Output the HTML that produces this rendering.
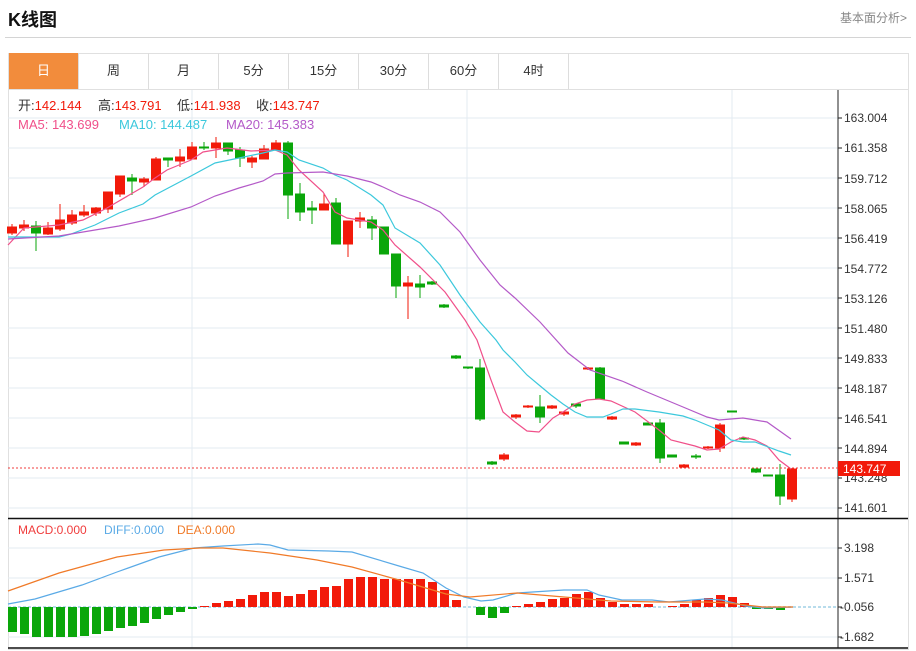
<!DOCTYPE html>
<html><head><meta charset="utf-8"><style>
body{margin:0;width:916px;height:651px;background:#fff;font-family:"Liberation Sans","Noto Sans CJK SC",sans-serif;overflow:hidden;position:relative}
.t{position:absolute;white-space:nowrap}
.tab{position:absolute;top:53px;height:36px;width:69px;border-right:1px solid #ddd;text-align:center;line-height:36px;font-size:13px;color:#333}
</style></head><body>
<div class="t" style="left:8px;top:6px;font-size:18px;font-weight:bold;color:#111">K线图</div>
<div class="t" style="left:840px;top:9px;font-size:12px;color:#888">基本面分析&gt;</div>
<div style="position:absolute;left:5px;top:37px;width:906px;height:1px;background:#d4d4d4"></div>
<div style="position:absolute;left:8px;top:53px;width:899px;height:595px;border:1px solid #e0e0e0"></div>
<div style="position:absolute;left:8px;top:89px;width:900px;height:1px;background:#e0e0e0"></div>
<div class="tab" style="left:9px;background:#f28c3c;color:#fff">日</div>
<div class="tab" style="left:79px">周</div>
<div class="tab" style="left:149px">月</div>
<div class="tab" style="left:219px">5分</div>
<div class="tab" style="left:289px">15分</div>
<div class="tab" style="left:359px">30分</div>
<div class="tab" style="left:429px">60分</div>
<div class="tab" style="left:499px">4时</div>
<svg style="position:absolute;left:0;top:0" width="916" height="651">
<g stroke="#e3ebf2" stroke-width="1">
<line x1="8" x2="838" y1="118" y2="118"/><line x1="8" x2="838" y1="148" y2="148"/><line x1="8" x2="838" y1="178" y2="178"/><line x1="8" x2="838" y1="208" y2="208"/><line x1="8" x2="838" y1="238" y2="238"/><line x1="8" x2="838" y1="268" y2="268"/><line x1="8" x2="838" y1="298" y2="298"/><line x1="8" x2="838" y1="328" y2="328"/><line x1="8" x2="838" y1="358" y2="358"/><line x1="8" x2="838" y1="388" y2="388"/><line x1="8" x2="838" y1="418" y2="418"/><line x1="8" x2="838" y1="448" y2="448"/><line x1="8" x2="838" y1="478" y2="478"/><line x1="8" x2="838" y1="508" y2="508"/>
<line x1="8" x2="838" y1="548" y2="548"/><line x1="8" x2="838" y1="578" y2="578"/><line x1="8" x2="838" y1="637" y2="637"/>
<line x1="192" x2="192" y1="90" y2="648"/><line x1="467" x2="467" y1="90" y2="648"/><line x1="732" x2="732" y1="90" y2="648"/>
</g>
<line x1="8" x2="838" y1="607" y2="607" stroke="#b8dcec" stroke-width="2" stroke-dasharray="3,2"/>
<line x1="838" x2="838" y1="90" y2="648" stroke="#222"/>
<line x1="8" x2="908" y1="518.5" y2="518.5" stroke="#111" stroke-width="1.5"/>
<line x1="8" x2="908" y1="648" y2="648" stroke="#111" stroke-width="1.5"/>
<g stroke="#222"><line x1="838" x2="842" y1="118" y2="118"/><line x1="838" x2="842" y1="148" y2="148"/><line x1="838" x2="842" y1="178" y2="178"/><line x1="838" x2="842" y1="208" y2="208"/><line x1="838" x2="842" y1="238" y2="238"/><line x1="838" x2="842" y1="268" y2="268"/><line x1="838" x2="842" y1="298" y2="298"/><line x1="838" x2="842" y1="328" y2="328"/><line x1="838" x2="842" y1="358" y2="358"/><line x1="838" x2="842" y1="388" y2="388"/><line x1="838" x2="842" y1="418" y2="418"/><line x1="838" x2="842" y1="448" y2="448"/><line x1="838" x2="842" y1="478" y2="478"/><line x1="838" x2="842" y1="508" y2="508"/><line x1="838" x2="842" y1="548" y2="548"/><line x1="838" x2="842" y1="578" y2="578"/><line x1="838" x2="842" y1="607" y2="607"/><line x1="838" x2="842" y1="637" y2="637"/></g>
<g font-size="12" fill="#333" font-family="Liberation Sans, sans-serif">
<text x="844" y="122">163.004</text><text x="844" y="152">161.358</text><text x="844" y="183">159.712</text><text x="844" y="213">158.065</text><text x="844" y="243">156.419</text><text x="844" y="273">154.772</text><text x="844" y="303">153.126</text><text x="844" y="333">151.480</text><text x="844" y="363">149.833</text><text x="844" y="393">148.187</text><text x="844" y="423">146.541</text><text x="844" y="453">144.894</text><text x="844" y="482">143.248</text><text x="844" y="512">141.601</text>
<text x="844" y="552">3.198</text><text x="844" y="582">1.571</text><text x="840" y="611">-0.056</text><text x="840" y="641">-1.682</text>
</g>
<g>
<g stroke="#f21a0a" fill="#f21a0a">
<line x1="12" x2="12" y1="224" y2="235"/><rect x="7.5" y="227" width="9" height="6"/>
<line x1="24" x2="24" y1="220" y2="231"/><rect x="19.5" y="225" width="9" height="3"/>
<line x1="48" x2="48" y1="222" y2="235"/><rect x="43.5" y="228" width="9" height="6"/>
<line x1="60" x2="60" y1="204" y2="231"/><rect x="55.5" y="220" width="9" height="9"/>
<line x1="72" x2="72" y1="210" y2="225"/><rect x="67.5" y="215" width="9" height="8"/>
<line x1="84" x2="84" y1="205" y2="217"/><rect x="79.5" y="212" width="9" height="3"/>
<line x1="96" x2="96" y1="207" y2="216"/><rect x="91.5" y="208" width="9" height="5"/>
<line x1="108" x2="108" y1="192" y2="213"/><rect x="103.5" y="192" width="9" height="17"/>
<line x1="120" x2="120" y1="176" y2="197"/><rect x="115.5" y="176" width="9" height="18"/>
<line x1="144" x2="144" y1="177" y2="187"/><rect x="139.5" y="179" width="9" height="3"/>
<line x1="156" x2="156" y1="157" y2="180"/><rect x="151.5" y="159" width="9" height="21"/>
<line x1="180" x2="180" y1="149" y2="167"/><rect x="175.5" y="157" width="9" height="4"/>
<line x1="192" x2="192" y1="142" y2="159"/><rect x="187.5" y="147" width="9" height="12"/>
<line x1="216" x2="216" y1="137" y2="158"/><rect x="211.5" y="143" width="9" height="5"/>
<line x1="252" x2="252" y1="156" y2="168"/><rect x="247.5" y="158" width="9" height="4"/>
<line x1="264" x2="264" y1="145" y2="159"/><rect x="259.5" y="149" width="9" height="10"/>
<line x1="276" x2="276" y1="140" y2="150"/><rect x="271.5" y="143" width="9" height="7"/>
<line x1="324" x2="324" y1="193" y2="210"/><rect x="319.5" y="204" width="9" height="6"/>
<line x1="348" x2="348" y1="221" y2="257"/><rect x="343.5" y="221" width="9" height="23"/>
<line x1="360" x2="360" y1="212" y2="228"/><rect x="355.5" y="218" width="9" height="3"/>
<line x1="408" x2="408" y1="276" y2="319"/><rect x="403.5" y="283" width="9" height="3"/>
<line x1="504" x2="504" y1="453" y2="461"/><rect x="499.5" y="455" width="9" height="4"/>
<line x1="516" x2="516" y1="414" y2="419"/><rect x="511.5" y="415" width="9" height="2"/>
<line x1="528" x2="528" y1="405" y2="408"/><rect x="523.5" y="406" width="9" height="1"/>
<line x1="552" x2="552" y1="405" y2="409"/><rect x="547.5" y="406" width="9" height="2"/>
<line x1="564" x2="564" y1="411" y2="416"/><rect x="559.5" y="412" width="9" height="2"/>
<line x1="588" x2="588" y1="367" y2="370"/><rect x="583.5" y="368" width="9" height="1"/>
<line x1="612" x2="612" y1="416" y2="420"/><rect x="607.5" y="417" width="9" height="2"/>
<line x1="636" x2="636" y1="442" y2="446"/><rect x="631.5" y="443" width="9" height="2"/>
<line x1="684" x2="684" y1="464" y2="468"/><rect x="679.5" y="465" width="9" height="2"/>
<line x1="708" x2="708" y1="446" y2="449"/><rect x="703.5" y="447" width="9" height="1"/>
<line x1="720" x2="720" y1="423" y2="452"/><rect x="715.5" y="425" width="9" height="23"/>
<line x1="792" x2="792" y1="468" y2="502"/><rect x="787.5" y="469" width="9" height="30"/>
</g>
<g stroke="#0aa60a" fill="#0aa60a">
<line x1="36" x2="36" y1="221" y2="251"/><rect x="31.5" y="226" width="9" height="7"/>
<line x1="132" x2="132" y1="174" y2="195"/><rect x="127.5" y="178" width="9" height="3"/>
<line x1="168" x2="168" y1="158" y2="167"/><rect x="163.5" y="158" width="9" height="2"/>
<line x1="204" x2="204" y1="142" y2="150"/><rect x="199.5" y="147" width="9" height="1"/>
<line x1="228" x2="228" y1="143" y2="155"/><rect x="223.5" y="143" width="9" height="8"/>
<line x1="240" x2="240" y1="147" y2="167"/><rect x="235.5" y="150" width="9" height="8"/>
<line x1="288" x2="288" y1="141" y2="219"/><rect x="283.5" y="143" width="9" height="52"/>
<line x1="300" x2="300" y1="183" y2="221"/><rect x="295.5" y="194" width="9" height="18"/>
<line x1="312" x2="312" y1="201" y2="224"/><rect x="307.5" y="208" width="9" height="2"/>
<line x1="336" x2="336" y1="198" y2="244"/><rect x="331.5" y="203" width="9" height="41"/>
<line x1="372" x2="372" y1="216" y2="240"/><rect x="367.5" y="220" width="9" height="8"/>
<line x1="384" x2="384" y1="227" y2="254"/><rect x="379.5" y="227" width="9" height="27"/>
<line x1="396" x2="396" y1="254" y2="298"/><rect x="391.5" y="254" width="9" height="32"/>
<line x1="420" x2="420" y1="275" y2="298"/><rect x="415.5" y="284" width="9" height="3"/>
<line x1="432" x2="432" y1="281" y2="285"/><rect x="427.5" y="282" width="9" height="2"/>
<line x1="444" x2="444" y1="304" y2="308"/><rect x="439.5" y="305" width="9" height="2"/>
<line x1="456" x2="456" y1="355" y2="359"/><rect x="451.5" y="356" width="9" height="2"/>
<line x1="468" x2="468" y1="367" y2="369"/><rect x="463.5" y="367" width="9" height="1"/>
<line x1="480" x2="480" y1="359" y2="421"/><rect x="475.5" y="368" width="9" height="51"/>
<line x1="492" x2="492" y1="461" y2="465"/><rect x="487.5" y="462" width="9" height="2"/>
<line x1="540" x2="540" y1="395" y2="423"/><rect x="535.5" y="407" width="9" height="10"/>
<line x1="576" x2="576" y1="404" y2="408"/><rect x="571.5" y="404" width="9" height="2"/>
<line x1="600" x2="600" y1="367" y2="399"/><rect x="595.5" y="368" width="9" height="31"/>
<line x1="624" x2="624" y1="442" y2="444"/><rect x="619.5" y="442" width="9" height="2"/>
<line x1="648" x2="648" y1="423" y2="425"/><rect x="643.5" y="423" width="9" height="2"/>
<line x1="660" x2="660" y1="419" y2="463"/><rect x="655.5" y="423" width="9" height="35"/>
<line x1="672" x2="672" y1="455" y2="457"/><rect x="667.5" y="455" width="9" height="2"/>
<line x1="696" x2="696" y1="454" y2="459"/><rect x="691.5" y="456" width="9" height="1"/>
<line x1="732" x2="732" y1="411" y2="412"/><rect x="727.5" y="411" width="9" height="1"/>
<line x1="744" x2="744" y1="437" y2="440"/><rect x="739.5" y="438" width="9" height="1"/>
<line x1="756" x2="756" y1="469" y2="473"/><rect x="751.5" y="469" width="9" height="3"/>
<line x1="768" x2="768" y1="475" y2="476"/><rect x="763.5" y="475" width="9" height="1"/>
<line x1="780" x2="780" y1="464" y2="505"/><rect x="775.5" y="475" width="9" height="21"/>
</g>
</g>
<g fill="none" stroke-width="1.2">
<polyline stroke="#f0508a" points="8,245 24,228 59,225 83,220 107,208 143,187 155,178 167,170 191,160 203,152 227,148 251,151 275,150 287,155 299,170 323,192 335,212 347,218 371,222 383,230 395,245 420,267 445,292 465,320 477,340 491,380 503,412 515,422 527,431 539,432 553,418 563,412 575,404 587,400 599,399 611,401 635,412 659,430 671,440 695,446 707,450 719,449 731,442 743,437 755,440 767,446 779,460 791,469"/>
<polyline stroke="#3cc8dc" points="8,237 59,237 71,234 95,225 119,213 143,204 155,195 191,176 215,163 239,158 263,153 275,150 287,152 299,160 323,168 335,175 347,180 371,195 383,205 395,228 420,243 440,265 460,295 480,322 496,340 503,350 515,362 527,375 539,385 551,395 563,404 575,412 587,417 603,417 611,414 623,409 635,409 659,412 671,414 683,416 695,420 707,425 719,430 731,440 743,442 755,442 779,451 791,455"/>
<polyline stroke="#b45ac8" points="8,239 59,236 95,230 119,226 155,218 191,207 215,196 239,188 263,181 275,174 287,173 323,172 347,176 371,182 383,187 400,195 420,202 440,212 460,232 480,260 500,285 515,298 540,322 568,353 590,370 622,381 647,392 671,402 683,407 707,417 719,420 731,419 743,418 755,420 767,422 791,439"/>
</g>
<line x1="8" x2="838" y1="468" y2="468" stroke="#f03c3c" stroke-dasharray="2,2"/>
<rect x="838" y="461" width="62" height="15" fill="#f21a0a"/>
<text x="843" y="473" font-size="12" fill="#fff">143.747</text>
<g fill="#0aa60a">
<rect x="8" y="607" width="9" height="25"/><rect x="20" y="607" width="9" height="27"/><rect x="32" y="607" width="9" height="30"/><rect x="44" y="607" width="9" height="30"/><rect x="56" y="607" width="9" height="30"/><rect x="68" y="607" width="9" height="30"/><rect x="80" y="607" width="9" height="29"/><rect x="92" y="607" width="9" height="27"/><rect x="104" y="607" width="9" height="24"/><rect x="116" y="607" width="9" height="21"/><rect x="128" y="607" width="9" height="19"/><rect x="140" y="607" width="9" height="16"/><rect x="152" y="607" width="9" height="12"/><rect x="164" y="607" width="9" height="8"/><rect x="176" y="607" width="9" height="5"/><rect x="188" y="607" width="9" height="2"/>
<rect x="476" y="607" width="9" height="8"/><rect x="488" y="607" width="9" height="11"/><rect x="500" y="607" width="9" height="6"/>
<rect x="752" y="607" width="9" height="2"/><rect x="764" y="607" width="9" height="2"/><rect x="776" y="607" width="9" height="3"/>
</g>
<g fill="#f21a0a">
<rect x="200" y="606" width="9" height="1"/><rect x="212" y="603" width="9" height="4"/><rect x="224" y="601" width="9" height="6"/><rect x="236" y="599" width="9" height="8"/><rect x="248" y="595" width="9" height="12"/><rect x="260" y="592" width="9" height="15"/><rect x="272" y="592" width="9" height="15"/><rect x="284" y="596" width="9" height="11"/><rect x="296" y="594" width="9" height="13"/><rect x="308" y="590" width="9" height="17"/><rect x="320" y="587" width="9" height="20"/><rect x="332" y="586" width="9" height="21"/><rect x="344" y="579" width="9" height="28"/><rect x="356" y="577" width="9" height="30"/><rect x="368" y="577" width="9" height="30"/><rect x="380" y="579" width="9" height="28"/><rect x="392" y="579" width="9" height="28"/><rect x="404" y="579" width="9" height="28"/><rect x="416" y="579" width="9" height="28"/><rect x="428" y="582" width="9" height="25"/><rect x="440" y="590" width="9" height="17"/><rect x="452" y="600" width="9" height="7"/>
<rect x="512" y="606" width="9" height="1"/><rect x="524" y="604" width="9" height="3"/><rect x="536" y="602" width="9" height="5"/><rect x="548" y="599" width="9" height="8"/><rect x="560" y="598" width="9" height="9"/><rect x="572" y="594" width="9" height="13"/><rect x="584" y="592" width="9" height="15"/><rect x="596" y="598" width="9" height="9"/><rect x="608" y="602" width="9" height="5"/><rect x="620" y="604" width="9" height="3"/><rect x="632" y="604" width="9" height="3"/><rect x="644" y="604" width="9" height="3"/><rect x="668" y="606" width="9" height="1"/><rect x="680" y="604" width="9" height="3"/><rect x="692" y="600" width="9" height="7"/><rect x="704" y="598" width="9" height="9"/><rect x="716" y="595" width="9" height="12"/><rect x="728" y="597" width="9" height="10"/><rect x="740" y="603" width="9" height="4"/>
</g>
<g fill="none" stroke-width="1.2">
<polyline stroke="#5aaae6" points="8,604 35,599 82,585 117,572 159,557 194,548 223,546 258,544 270,545 288,550 329,551 352,552 399,566 423,573 446,588 464,597 481,601 493,600 517,593 564,590 587,590 599,595 622,600 652,600 669,602 705,599 722,600 746,606 763,608 793,607"/>
<polyline stroke="#f07a28" points="8,591 59,573 117,557 164,550 200,548 223,548 270,553 317,560 352,567 399,580 446,594 470,597 517,593 564,597 611,601 658,602 705,602 728,603 763,607 793,607"/>
</g>
<g font-size="12">
<text x="18" y="534" fill="#f03c3c">MACD:0.000</text>
<text x="104" y="534" fill="#5aaae6">DIFF:0.000</text>
<text x="177" y="534" fill="#f07a28">DEA:0.000</text>
</g>
<g font-size="13" font-family="Liberation Sans, Noto Sans CJK SC, sans-serif">
<text x="18" y="110" fill="#333">开:<tspan fill="#f21a0a">142.144</tspan></text>
<text x="98" y="110" fill="#333">高:<tspan fill="#f21a0a">143.791</tspan></text>
<text x="177" y="110" fill="#333">低:<tspan fill="#f21a0a">141.938</tspan></text>
<text x="256" y="110" fill="#333">收:<tspan fill="#f21a0a">143.747</tspan></text>
<text x="18" y="129" fill="#f0508a">MA5: 143.699</text>
<text x="119" y="129" fill="#3cc8dc">MA10: 144.487</text>
<text x="226" y="129" fill="#b45ac8">MA20: 145.383</text>
</g>
</svg>
</body></html>
